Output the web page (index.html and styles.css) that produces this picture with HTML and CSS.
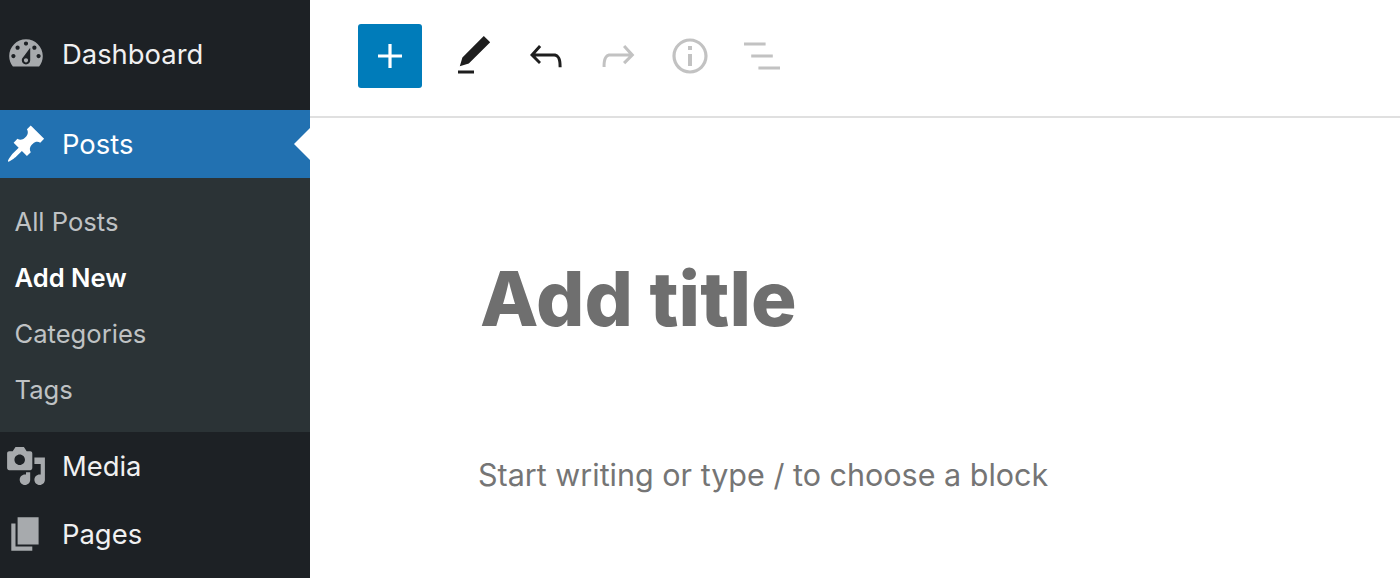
FILE: index.html
```html
<!DOCTYPE html>
<html lang="en">
<head>
<meta charset="utf-8">
<title>Add New Post</title>
<link rel="stylesheet" href="styles.css">
</head>
<body>
<div class="app">
  <nav class="sidebar">
    <a class="menu-item menu-first">
      <svg class="menu-icon" viewBox="0 0 20 20"><path fill-rule="evenodd" d="M3.76 16h12.48c1.1-1.37 1.76-3.11 1.76-5 0-4.42-3.58-8-8-8s-8 3.58-8 8c0 1.89.66 3.63 1.76 5zM10 4c.55 0 1 .45 1 1s-.45 1-1 1-1-.45-1-1 .45-1 1-1zM6 6c.55 0 1 .45 1 1s-.45 1-1 1-1-.45-1-1 .45-1 1-1zm8 0c.55 0 1 .45 1 1s-.45 1-1 1-1-.45-1-1 .45-1 1-1zm-5.37 5.55L12 7v6c0 1.1-.9 2-2 2s-2-.9-2-2c0-.57.24-1.08.63-1.45zM4 10c.55 0 1 .45 1 1s-.45 1-1 1-1-.45-1-1 .45-1 1-1zm12 0c.55 0 1 .45 1 1s-.45 1-1 1-1-.45-1-1 .45-1 1-1zm-5 3c0-.55-.45-1-1-1s-1 .45-1 1 .45 1 1 1 1-.45 1-1z"/></svg>
      <span>Dashboard</span>
    </a>
    <a class="menu-item menu-current">
      <svg class="menu-icon" viewBox="0 0 20 20"><path d="M10.44 3.02l1.82-1.82 6.36 6.35-1.83 1.82c-1.05-.68-2.48-.57-3.41.36l-.75.75c-.92.93-1.04 2.35-.35 3.41l-1.83 1.82-2.41-2.41-2.8 2.79c-.42.42-3.38 2.71-3.8 2.29s1.86-3.39 2.28-3.81l2.79-2.79L4.1 9.36l1.83-1.82c1.05.69 2.48.57 3.41-.36l.75-.75c.93-.92 1.05-2.35.35-3.41z"/></svg>
      <span>Posts</span>
    </a>
    <ul class="submenu">
      <li class="submenu-item">All Posts</li>
      <li class="submenu-item submenu-current">Add New</li>
      <li class="submenu-item">Categories</li>
      <li class="submenu-item">Tags</li>
    </ul>
    <a class="menu-item">
      <svg class="menu-icon" viewBox="0 0 20 20"><path d="M13 11V4c0-.55-.45-1-1-1h-1.67L9 1H5L3.67 3H2c-.55 0-1 .45-1 1v7c0 .55.45 1 1 1h10c.55 0 1-.45 1-1zM7 4.5c1.38 0 2.5 1.12 2.5 2.5S8.38 9.5 7 9.5 4.5 8.38 4.5 7 5.62 4.5 7 4.5zM14 6h5v10.5c0 1.38-1.12 2.5-2.5 2.5S14 17.88 14 16.5s1.12-2.5 2.5-2.5c.17 0 .34.02.5.05V9h-3V6zm-4 8.05V13h2v3.5c0 1.38-1.12 2.5-2.5 2.5S7 17.88 7 16.5 8.12 14 9.5 14c.17 0 .34.02.5.05z"/></svg>
      <span>Media</span>
    </a>
    <a class="menu-item">
      <svg class="menu-icon" viewBox="0 0 20 20"><path d="M6 15V2h10v13H6zm-1 1h8v2H3V5h2v11z"/></svg>
      <span>Pages</span>
    </a>
  </nav>
  <main class="editor">
    <header class="toolbar">
      <button class="add-button" type="button">
        <svg class="tool-icon" viewBox="0 0 24 24"><path d="M18 11.2h-5.2V6h-1.6v5.2H6v1.6h5.2V18h1.6v-5.2H18z"/></svg>
      </button>
      <button class="tool-button tool-first" type="button">
        <svg class="tool-icon" viewBox="0 0 24 24"><path d="M20.1 5.1L16.9 2 6.2 12.7l-1.3 4.4 4.5-1.3L20.1 5.1zM4 20.8h8v-1.5H4v1.5z"/></svg>
      </button>
      <button class="tool-button" type="button">
        <svg class="tool-icon" viewBox="0 0 24 24"><path d="M18.3 11.7c-.6-.6-1.4-.9-2.3-.9H6.7l2.9-3.3-1.1-1-4.5 5L8.5 16l1-1-2.7-2.7H16c.5 0 .9.2 1.3.5 1 1 1 3.4 1 4.5v.3h1.5v-.2c0-1.5 0-4.3-1.5-5.7z"/></svg>
      </button>
      <button class="tool-button tool-disabled" type="button">
        <svg class="tool-icon" viewBox="0 0 24 24"><path d="M15.6 6.5l-1.1 1 2.9 3.3H8c-.9 0-1.7.3-2.3.9-1.4 1.5-1.4 4.2-1.4 5.6v.2h1.5v-.3c0-1.1 0-3.5 1-4.5.3-.3.7-.5 1.3-.5h9.2L14.5 15l1.1 1.1 4.6-4.6-4.6-5z"/></svg>
      </button>
      <button class="tool-button tool-disabled" type="button">
        <svg class="tool-icon" viewBox="0 0 24 24"><path d="M12 3.2c-4.8 0-8.8 3.9-8.8 8.8 0 4.8 3.9 8.8 8.8 8.8 4.8 0 8.8-3.9 8.8-8.8 0-4.8-4-8.8-8.8-8.8zm0 16c-4 0-7.2-3.3-7.2-7.2C4.8 8 8 4.8 12 4.8s7.2 3.3 7.2 7.2c0 4-3.2 7.2-7.2 7.2zM11 17h2v-6h-2v6zm0-8h2V7h-2v2z"/></svg>
      </button>
      <button class="tool-button tool-disabled" type="button">
        <svg class="tool-icon" viewBox="0 0 24 24"><path d="M13.8 5.2H3v1.5h10.8V5.2zm-3.6 12v1.5H21v-1.5H10.2zm7.2-6H6.6v1.5h10.8v-1.5z"/></svg>
      </button>
    </header>
    <section class="canvas">
      <h1 class="post-title">Add title</h1>
      <p class="post-placeholder">Start writing or type / to choose a block</p>
    </section>
  </main>
</div>
</body>
</html>
```
FILE: styles.css
```css
* { box-sizing: border-box; }
html, body { margin: 0; height: 100%; overflow: hidden; background: #fff; }
body { font-family: Inter, "Liberation Sans", sans-serif; }
.app { display: flex; height: 578px; }

.sidebar {
  width: 310px;
  flex: none;
  padding-top: 20px;
  background: #1d2125;
  color: #f0f0f1;
}
.menu-item {
  position: relative;
  display: flex;
  align-items: center;
  gap: 15px;
  height: 68px;
  padding-left: 5px;
  font-size: 27.4px;
  font-weight: 400;
}
.menu-first { margin-bottom: 22px; }
.menu-icon { width: 42px; height: 42px; flex: none; fill: #a7aaad; }
.menu-current { background: #2271b1; color: #fff; }
.menu-current .menu-icon { fill: #fff; }
.menu-current::after {
  content: "";
  position: absolute;
  right: 0;
  top: 50%;
  margin-top: -16px;
  border: 16px solid transparent;
  border-left-width: 0;
  border-right-color: #fff;
}
.submenu {
  list-style: none;
  margin: 0;
  padding: 15px 0;
  background: #2b3336;
}
.submenu-item {
  display: flex;
  align-items: center;
  height: 56px;
  padding-left: 14.5px;
  font-size: 25.6px;
  color: #bfc2c4;
}
.submenu-current { color: #fff; font-weight: 600; }

.editor { flex: 1; min-width: 0; }
.toolbar {
  display: flex;
  align-items: center;
  height: 118px;
  padding: 0 0 4px 48px;
  border-bottom: 2px solid #e0e0e0;
}
.add-button {
  display: flex;
  align-items: center;
  justify-content: center;
  width: 64px;
  height: 64px;
  padding: 0;
  border: 0;
  border-radius: 3px;
  background: #007cba;
  margin-right: 16px;
}
.add-button .tool-icon { fill: #fff; }
.tool-button {
  display: flex;
  align-items: center;
  justify-content: center;
  width: 72px;
  height: 64px;
  padding: 0;
  border: 0;
  background: none;
}
.tool-icon { width: 48px; height: 48px; fill: #1e1e1e; }
.tool-disabled .tool-icon { fill: #c2c2c2; }

.canvas { padding: 136px 0 0 168px; }
.post-title {
  margin: 0 0 0 2px;
  font-size: 76px;
  line-height: 88px;
  font-weight: 800;
  color: #6f6f6f;
}
.post-placeholder {
  margin: 113px 0 0;
  font-size: 30.5px;
  line-height: 40px;
  color: #757575;
}
```
